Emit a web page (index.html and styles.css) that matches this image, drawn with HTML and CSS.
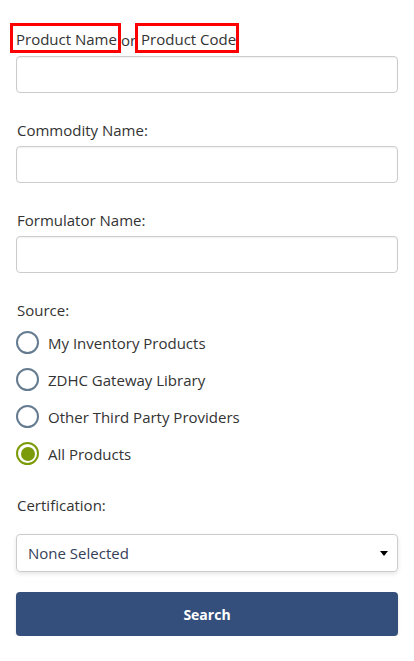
FILE: index.html
```html
<!DOCTYPE html>
<html>
<head>
<meta charset="utf-8">
<link rel="stylesheet" href="styles.css">
</head>
<body>
<form class="form">
  <div class="field">
    <label class="label label-first"><span class="hl hl-a">Product Name</span><span class="or">or</span><span class="hl hl-b">Product Code</span></label>
    <div class="input"></div>
  </div>
  <div class="field">
    <label class="label">Commodity Name:</label>
    <div class="input"></div>
  </div>
  <div class="field">
    <label class="label">Formulator Name:</label>
    <div class="input"></div>
  </div>
  <div class="field field-source">
    <label class="label">Source:</label>
    <div class="radios">
      <div class="radio"><span class="circle"></span><span>My Inventory Products</span></div>
      <div class="radio"><span class="circle"></span><span>ZDHC Gateway Library</span></div>
      <div class="radio"><span class="circle"></span><span>Other Third Party Providers</span></div>
      <div class="radio"><span class="circle checked"></span><span>All Products</span></div>
    </div>
  </div>
  <div class="field field-cert">
    <label class="label">Certification:</label>
    <div class="select"><span>None Selected</span><span class="caret"></span></div>
  </div>
  <div class="button">Search</div>
</form>
</body>
</html>
```

FILE: styles.css
```css
html, body {
  margin: 0;
  padding: 0;
  background: #fff;
}
body {
  font-family: "Open Sans", "Liberation Sans", sans-serif;
  font-size: 15px;
  color: #333;
}
.form {
  padding: 30px 16px 0 16px;
}
.field {
  margin-bottom: 27px;
}
.label {
  display: block;
  line-height: 20px;
  height: 20px;
  margin-bottom: 6px;
  padding-left: 1px;
}
.label-first {
  white-space: nowrap;
}
.hl {
  display: inline-block;
  border: 3px solid #f00;
  line-height: 20px;
  padding: 3px 0 1px 3px;
  margin-top: -7px;
  vertical-align: top;
}
.hl-a {
  margin-left: -7px;
  padding-right: 1px;
}
.hl-b {
  margin-left: -1px;
  padding-right: 0;
  margin-right: -2px;
}
.or {
  margin-left: 0;
}
.input {
  height: 35px;
  border: 1px solid #ccc;
  border-radius: 4px;
  box-shadow: inset 0 1px 2px rgba(0,0,0,0.06);
}
.field-source {
  margin-bottom: 23px;
}
.radios {
  margin-top: -2px;
}
.radio {
  display: flex;
  align-items: center;
  height: 37px;
  gap: 9px;
}
.circle {
  width: 19px;
  height: 19px;
  border: 2px solid #657b90;
  border-radius: 50%;
  box-sizing: content-box;
  flex: none;
  position: relative;
}
.circle.checked {
  border-color: #7c9b08;
}
.circle.checked::after {
  content: "";
  position: absolute;
  left: 2.5px;
  top: 2.5px;
  width: 14px;
  height: 14px;
  border-radius: 50%;
  background: #7c9b08;
}
.field-cert .label {
  margin-bottom: 19px;
}
.field-cert {
  margin-bottom: 20px;
}
.select {
  height: 36px;
  border: 1px solid #ccc;
  border-radius: 4px;
  box-shadow: 0 2px 4px rgba(0,0,0,0.1);
  display: flex;
  align-items: center;
  justify-content: space-between;
  padding: 0 9px 0 11px;
  color: #34405a;
}
.caret {
  width: 0;
  height: 0;
  border-left: 4.5px solid transparent;
  border-right: 4.5px solid transparent;
  border-top: 5px solid #000;
}
.button {
  height: 44px;
  background: #344f7c;
  border-radius: 4px;
  color: #fff;
  font-weight: 700;
  font-size: 14px;
  display: flex;
  align-items: center;
  justify-content: center;
  box-shadow: 0 2px 3px rgba(0,0,0,0.12);
}
```
